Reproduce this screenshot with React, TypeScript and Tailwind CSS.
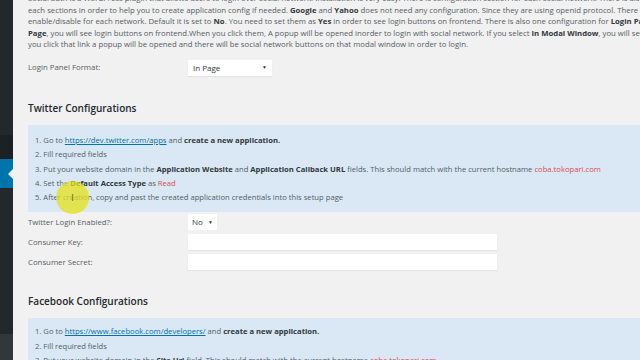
import React from 'react';

const font = { fontFamily: '"Open Sans", "Noto Sans", sans-serif' };

function Row({ label, children }: { label: string; children: React.ReactNode }) {
  return (
    <div className="flex items-center h-[20px]">
      <div className="w-[160px] text-[7.8px] text-[#555d66]">{label}</div>
      {children}
    </div>
  );
}

export default function App() {
  return (
    <div className="relative w-[640px] h-[360px] overflow-hidden flex bg-[#f1f1f1]" style={font}>
      {/* admin sidebar */}
      <div className="w-[13px] flex flex-col shrink-0">
        <div className="h-[135px] bg-[#23282d]" />
        <div className="h-[24px] bg-[#1c2126]" />
        <div className="relative h-[29px] bg-[#0073aa]">
          <div className="absolute right-0 top-[10px] w-0 h-0 border-y-[5px] border-y-transparent border-r-[5px] border-r-[#f1f1f1]" />
        </div>
        <div className="h-[146px] bg-[#23282d]" />
        <div className="flex-1 bg-[#32373c]" />
      </div>

      <div className="flex-1 pl-[15px] text-[#555d66]">
        <div className="mt-[-7px] text-[7.75px] leading-[11.6px] whitespace-nowrap">
          <p>Social auth is a WordPress plugin that allows users to login over social network. Installation is very easy. There is configuration section for each social network. There is also</p>
          <p>each sections in order to help you to create application config if needed. <b className="text-[#32373c]">Google</b> and <b className="text-[#32373c]">Yahoo</b> does not need any configuration. Since they are using openid protocol. There is</p>
          <p>enable/disable for each network. Default it is set to <b className="text-[#32373c]">No</b>. You need to set them as <b className="text-[#32373c]">Yes</b> in order to see login buttons on frontend. There is also one configuration for <b className="text-[#32373c]">Login Panel Format</b></p>
          <p><b className="text-[#32373c]">Page</b>, you will see login buttons on frontend.When you click them, A popup will be opened inorder to login with social network. If you select <b className="text-[#32373c]">In Modal Window</b>, you will see</p>
          <p>you click that link a popup will be opened and there will be social network buttons on that modal window in order to login.</p>
        </div>

        <div className="mt-[7px]">
          <Row label="Login Panel Format:">
            <div className="w-[84px] h-[16px] bg-white flex items-center justify-between px-[5px] text-[8px] text-[#32373c] shadow-[0_1px_1px_rgba(0,0,0,0.06)]">
              <span>In Page</span>
              <span className="text-[5px]">▼</span>
            </div>
          </Row>
        </div>

        <h2 className="mt-[23px] text-[10px] font-semibold text-[#23282d] leading-[14px]">Twitter Configurations</h2>

        <div className="mt-[10px] bg-[#d9e8f4] pl-[7px] pt-[8px] pb-[8px] text-[7.65px] leading-[14.3px] whitespace-nowrap">
          <p>1. Go to <span className="text-[#0073aa] underline">https://dev.twitter.com/apps</span> and <b className="text-[#32373c]">create a new application.</b></p>
          <p>2. Fill required fields</p>
          <p>3. Put your website domain in the <b className="text-[#32373c]">Application Website</b> and <b className="text-[#32373c]">Application Callback URL</b> fields. This should match with the current hostname <span className="text-[#dc4a52]">coba.tokopari.com</span></p>
          <p>4. Set the <b className="text-[#32373c]">Default Access Type</b> as <span className="text-[#dc4a52]">Read</span></p>
          <p>5. After creation, copy and past the created application credentials into this setup page</p>
        </div>

        <div>
          <Row label="Twitter Login Enabled?:">
            <div className="w-[29px] h-[16px] bg-white flex items-center justify-between px-[4px] text-[8px] text-[#32373c]">
              <span>No</span>
              <span className="text-[5px]">▼</span>
            </div>
          </Row>
          <Row label="Consumer Key:">
            <div className="w-[309px] h-[16px] bg-white shadow-[0_1px_1px_rgba(0,0,0,0.05)]" />
          </Row>
          <Row label="Consumer Secret:">
            <div className="w-[309px] h-[16px] bg-white shadow-[0_1px_1px_rgba(0,0,0,0.05)]" />
          </Row>
        </div>

        <h2 className="mt-[22px] text-[10px] font-semibold text-[#23282d] leading-[14px]">Facebook Configurations</h2>

        <div className="mt-[10px] bg-[#d9e8f4] pl-[7px] pt-[6px] text-[7.65px] leading-[14.3px] whitespace-nowrap">
          <p>1. Go to <span className="text-[#0073aa] underline">https://www.facebook.com/developers/</span> and <b className="text-[#32373c]">create a new application.</b></p>
          <p>2. Fill required fields</p>
          <p>3. Put your website domain in the <b className="text-[#32373c]">Site Url</b> field. This should match with the current hostname <span className="text-[#dc4a52]">coba.tokopari.com</span></p>
        </div>
      </div>

      {/* screen recorder cursor highlight */}
      <div className="absolute left-[56px] top-[181px] w-[33px] h-[33px] rounded-full bg-[#e6e21c]/75 flex items-center justify-center">
        <span className="text-[9px] text-[#555] leading-none">I</span>
      </div>
    </div>
  );
}
